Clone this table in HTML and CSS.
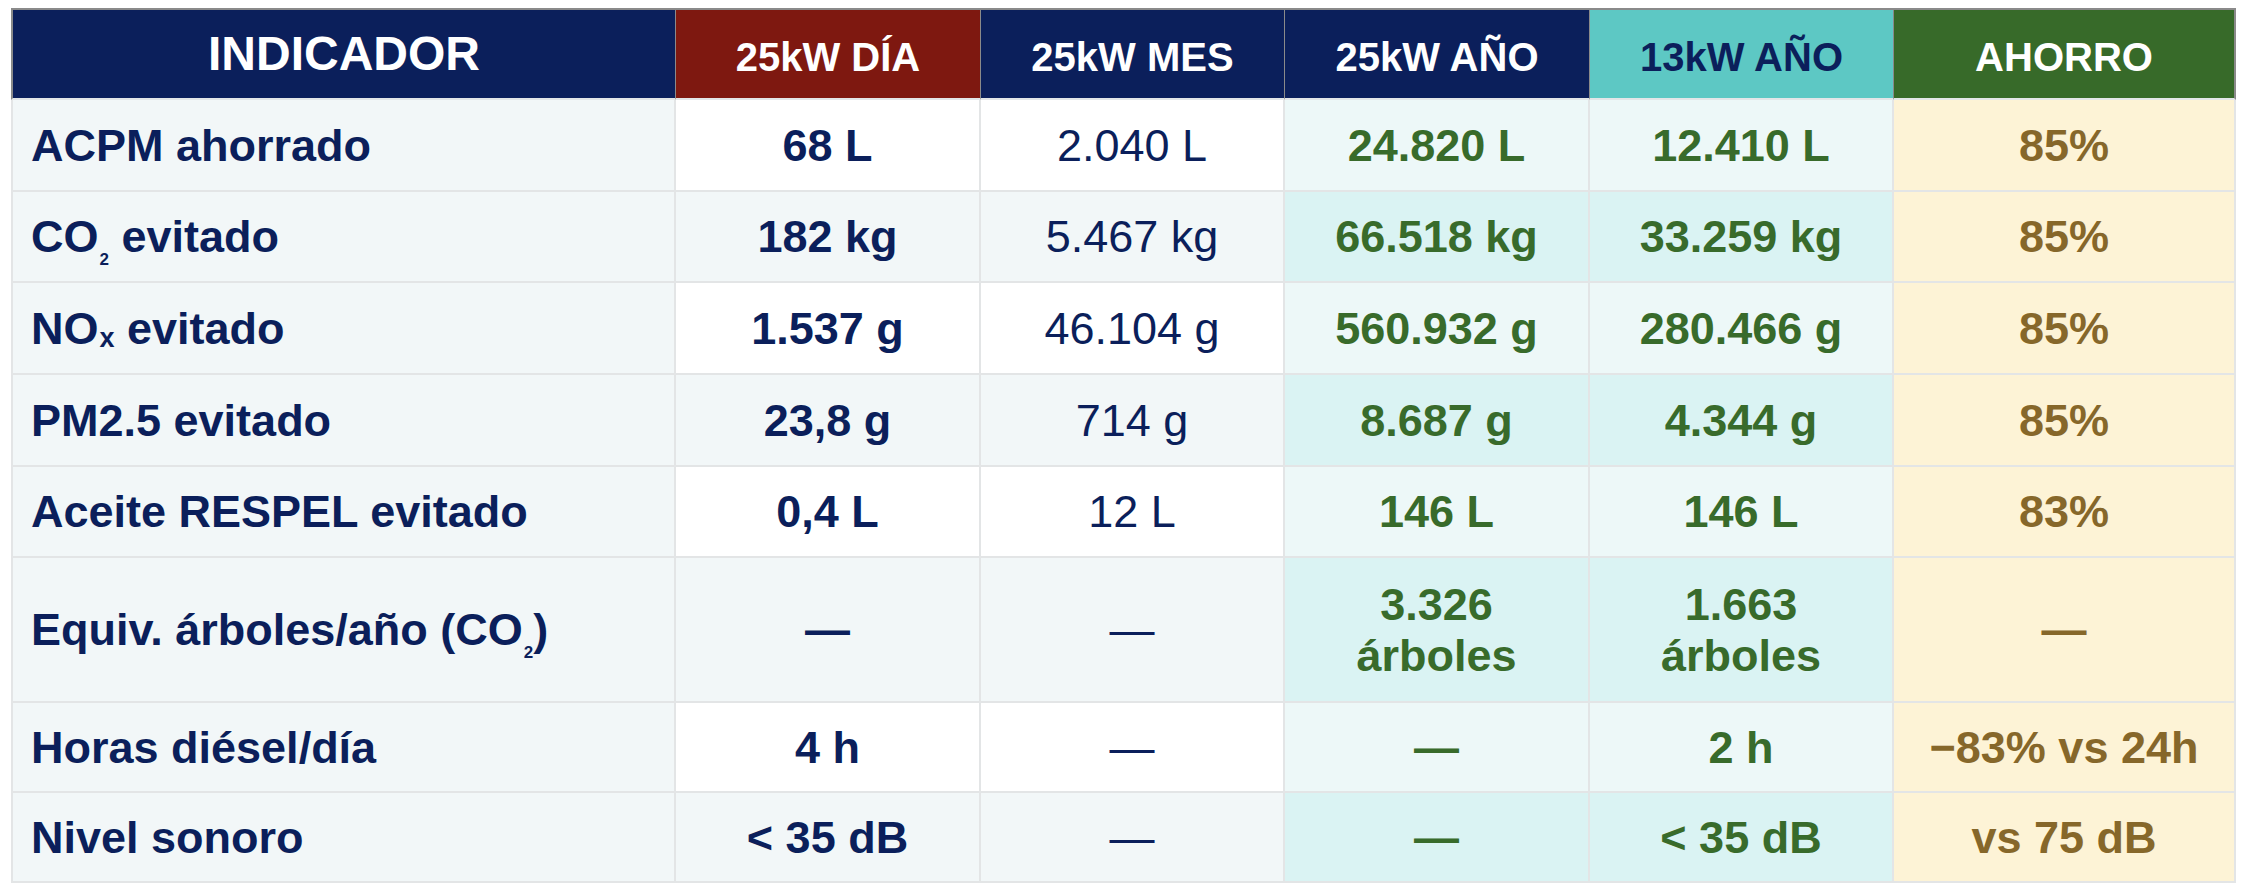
FILE: index.html
```html
<!DOCTYPE html>
<html lang="es">
<head>
<meta charset="utf-8">
<title>Indicadores ambientales</title>
<link rel="stylesheet" href="styles.css">
</head>
<body>
<div class="grid">
  <div class="th h-ind"><span>INDICADOR</span></div>
  <div class="th h-red"><span>25kW DÍA</span></div>
  <div class="th h-navy"><span>25kW MES</span></div>
  <div class="th h-navy"><span>25kW AÑO</span></div>
  <div class="th h-teal"><span>13kW AÑO</span></div>
  <div class="th h-green"><span>AHORRO</span></div>

  <div class="td c1 odd"><span>ACPM ahorrado</span></div>
  <div class="td c2 odd"><span>68 L</span></div>
  <div class="td c3 odd"><span>2.040 L</span></div>
  <div class="td c4 odd"><span>24.820 L</span></div>
  <div class="td c5 odd"><span>12.410 L</span></div>
  <div class="td c6"><span>85%</span></div>

  <div class="td c1 even"><span>CO<span class="sub2">2</span> evitado</span></div>
  <div class="td c2 even"><span>182 kg</span></div>
  <div class="td c3 even"><span>5.467 kg</span></div>
  <div class="td c4 even"><span>66.518 kg</span></div>
  <div class="td c5 even"><span>33.259 kg</span></div>
  <div class="td c6"><span>85%</span></div>

  <div class="td c1 odd"><span>NO<span class="subx">x</span> evitado</span></div>
  <div class="td c2 odd"><span>1.537 g</span></div>
  <div class="td c3 odd"><span>46.104 g</span></div>
  <div class="td c4 odd"><span>560.932 g</span></div>
  <div class="td c5 odd"><span>280.466 g</span></div>
  <div class="td c6"><span>85%</span></div>

  <div class="td c1 even"><span>PM2.5 evitado</span></div>
  <div class="td c2 even"><span>23,8 g</span></div>
  <div class="td c3 even"><span>714 g</span></div>
  <div class="td c4 even"><span>8.687 g</span></div>
  <div class="td c5 even"><span>4.344 g</span></div>
  <div class="td c6"><span>85%</span></div>

  <div class="td c1 odd"><span>Aceite RESPEL evitado</span></div>
  <div class="td c2 odd"><span>0,4 L</span></div>
  <div class="td c3 odd"><span>12 L</span></div>
  <div class="td c4 odd"><span>146 L</span></div>
  <div class="td c5 odd"><span>146 L</span></div>
  <div class="td c6"><span>83%</span></div>

  <div class="td c1 even"><span>Equiv. árboles/año (CO<span class="sub2">2</span>)</span></div>
  <div class="td c2 even"><span>—</span></div>
  <div class="td c3 even"><span>—</span></div>
  <div class="td c4 even"><span>3.326<br>árboles</span></div>
  <div class="td c5 even"><span>1.663<br>árboles</span></div>
  <div class="td c6"><span>—</span></div>

  <div class="td c1 odd"><span>Horas diésel/día</span></div>
  <div class="td c2 odd"><span>4 h</span></div>
  <div class="td c3 odd"><span>—</span></div>
  <div class="td c4 odd"><span>—</span></div>
  <div class="td c5 odd"><span>2 h</span></div>
  <div class="td c6"><span>−83% vs 24h</span></div>

  <div class="td c1 even"><span>Nivel sonoro</span></div>
  <div class="td c2 even"><span>&lt; 35 dB</span></div>
  <div class="td c3 even"><span>—</span></div>
  <div class="td c4 even"><span>—</span></div>
  <div class="td c5 even"><span>&lt; 35 dB</span></div>
  <div class="td c6"><span>vs 75 dB</span></div>
</div>
</body>
</html>
```

FILE: styles.css
```css
html, body {
  margin: 0;
  padding: 0;
  background: #ffffff;
}

body {
  padding: 8px 11px 0 11px;
  font-family: "Liberation Sans", Arial, Helvetica, sans-serif;
}

.grid {
  display: grid;
  grid-template-columns: 665px 305px 304px 305px 304px 342px;
  grid-template-rows: 92px 92px 91px 92px 92px 91px 145px 90px 90px;
  width: 2225px;
}

.th,
.td {
  box-sizing: border-box;
  display: flex;
  align-items: center;
  justify-content: center;
  text-align: center;
  font-weight: bold;
}

.th {
  color: #ffffff;
  font-size: 40px;
  line-height: 46px;
  border-top: 2px solid #8a8a8a;
  border-right: 1px solid #8a8a8a;
  border-bottom: 2px solid #e3e6e8;
  padding-top: 6px;
}

.h-ind {
  background: #0b1f5b;
  font-size: 48px;
  border-left: 2px solid #8a8a8a;
  padding-top: 0;
}

.h-red { background: #7e1810; }
.h-navy { background: #0b1f5b; }
.h-teal { background: #5dc8c4; color: #0b1f5b; }
.h-green { background: #376a29; border-right: 2px solid #8a8a8a; }

.td {
  font-size: 45px;
  line-height: 51px;
  border-right: 2px solid #e3e5e6;
  border-bottom: 2px solid #e3e5e6;
}

.c1 {
  justify-content: flex-start;
  text-align: left;
  padding-left: 18px;
  border-left: 2px solid #e3e5e6;
  color: #0b1f5b;
  background: #f2f7f8;
}

.c2 { color: #0b1f5b; }

.c3 {
  color: #0b1f5b;
  font-weight: normal;
}

.c4,
.c5 { color: #386b2b; }

.c6 {
  color: #86672a;
  background: #fdf3d6;
}

.c2.odd,
.c3.odd { background: #ffffff; }

.c2.even,
.c3.even { background: #f2f7f8; }

.c4.odd,
.c5.odd { background: #edf8f8; }

.c4.even,
.c5.even { background: #daf3f3; }

.sub2 {
  font-size: 17px;
  line-height: 0;
  vertical-align: -13px;
  margin-left: 1px;
}

.subx {
  font-size: 27px;
  line-height: 0;
  vertical-align: -3px;
  margin-left: 1px;
}
```
